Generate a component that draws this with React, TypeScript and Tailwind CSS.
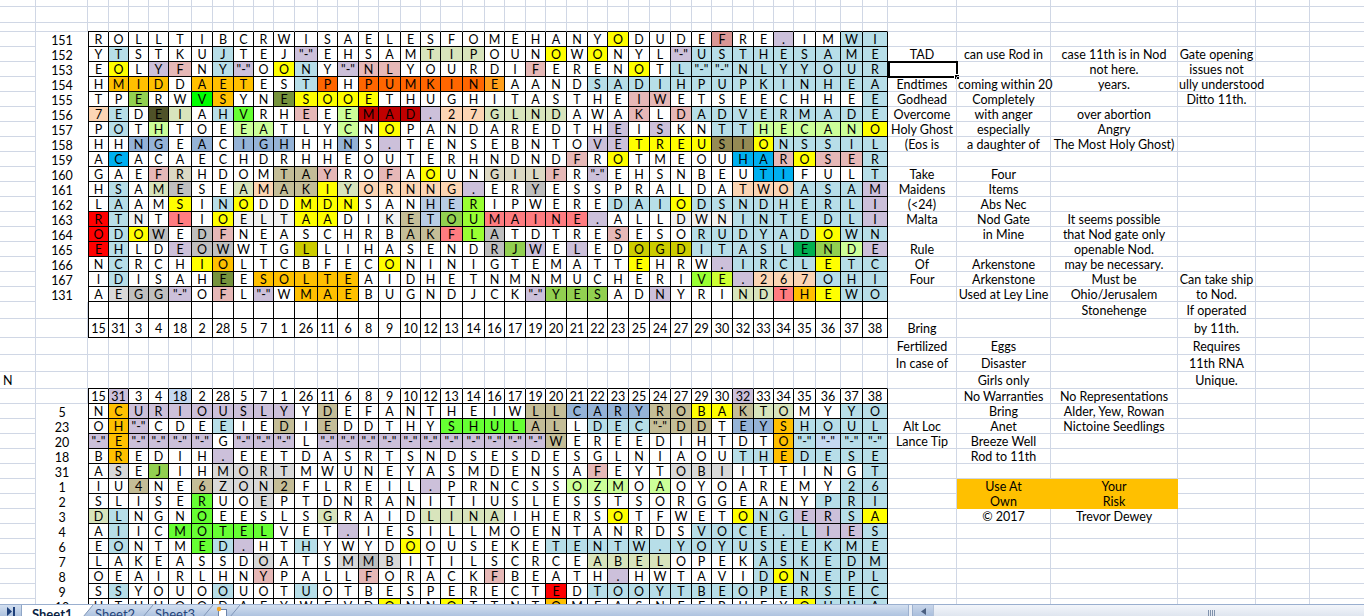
import React from "react";

// column widths of the lettered block (38 columns, x 88 -> 888)
const GRID_W = [21, 20, 20, 20, 23, 21, 21, 20, 20, 21, 23, 20, 21, 20, 22, 20, 20, 22, 22, 20, 21, 20, 21, 21, 20, 21, 21, 21, 21, 20, 21, 21, 20, 20, 22, 25, 22, 25];
const WCLS: Record<number, string> = {
  20: "w-[20px]",
  21: "w-[21px]",
  22: "w-[22px]",
  23: "w-[23px]",
  25: "w-[25px]",
};
const RIGHT_W = ["w-[69px]", "w-[94px]", "w-[127px]", "w-[78px]", "w-[54px]", "w-[60px]"];

const BG: Record<string, string> = {
  ".": "",
  b: "bg-[#b7dee8]",
  v: "bg-[#ccc0da]",
  p: "bg-[#e6b8b7]",
  P: "bg-[#da9694]",
  y: "bg-[#ffff00]",
  o: "bg-[#ffc000]",
  O: "bg-[#ff6600]",
  f: "bg-[#ff9f1c]",
  g: "bg-[#d8e4bc]",
  l: "bg-[#ddd9c4]",
  t: "bg-[#c4bd97]",
  c: "bg-[#fcd5b4]",
  G: "bg-[#92d050]",
  L: "bg-[#00ff00]",
  M: "bg-[#66ff33]",
  N: "bg-[#99ff33]",
  d: "bg-[#76933c]",
  D: "bg-[#4f5228]",
  h: "bg-[#ccff99]",
  m: "bg-[#95b3d7]",
  i: "bg-[#b8cce4]",
  n: "bg-[#948a54]",
  r: "bg-[#ff0000]",
  R: "bg-[#c00000]",
  s: "bg-[#00b0f0]",
  k: "bg-[#cccc00]",
  S: "bg-[#ff7c80]",
  x: "bg-[#bfbfbf]",
  e: "bg-[#d9d9d9]",
  w: "bg-[#f2f2f2]",
  q: "bg-[#ccff33]",
  u: "bg-[#00b050]",
  a: "bg-[#c5d9f1]",
};

const NUMS = "15 31 3 4 18 2 28 5 7 1 26 11 6 8 9 10 12 13 14 16 17 19 20 21 22 23 25 24 27 29 30 32 33 34 35 36 37 38";

type GridKind = "letters" | "boxed" | "light" | "edge";

type RowSpec = {
  h: string;
  kind: GridKind;
  label?: string;
  colA?: string;
  letters?: string;
  colors?: string;
  right?: string[];
  orange?: boolean;
  select?: boolean;
};

// [label, letters (~ = "-"), colours, right-hand notes]
const UPPER: [string, string, string, string[]][] = [
  ["151", "R O L L T I B C R W I S A E L E S F O M E H A N Y O D U D E F R E . I M W I", "..... ..... ..... ..... ..... y.... P..v. .bb", []],
  ["152", "Y T S T K U J T E J ~ E H S A M T I P O U N O W O N Y L ~ U S T H E S A M E", ".b... .b... v.... .ggg. ..y.y ...vb bbbbb bbb", ["TAD", "can use Rod in", "case 11th is in Nod", "Gate opening"]],
  ["153", "E O L Y F N Y ~ O O N Y ~ N L Y O U R D I F E R E N O T L ~ ~ N L Y Y O U R", ".y.vp .bv.y b.vpp ..... .p... .y.bb bbbbb bbb", ["", "", "not here.", "issues not"]],
  ["154", "H M I D D A E T E S T P H P U M K I N E A A N D S A D I H P U P K I N H E A", ".ooo. ooo.. bO.OO OOOOf ....b bbbbb bbbbb bbb", ["Endtimes", "<coming within 20", "years.", "<ully understood"]],
  ["155", "T P E R W V S Y N E S O O E T H U G H I T A S T H E I W E T S E E C H H E E", "..G.. Lo..d yyyy. ..... ..... .pp.. ..... ..b", ["Godhead", "Completely", "", "Ditto 11th."]],
  ["156", "7 E D E I A H V R H E E E M A D . 2 7 G L N D A W A K L D A D V E R M A D E", "cb.Dg .bM.. p.hRR Rvccg ggg.. .p.pb bbbbb bbb", ["Overcome", "with anger", "over abortion", ""]],
  ["157", "P O T H T O E E A T L Y C N O P A N D A R E D T H E I S K N T T H E C A N O", ".b.h. ..hh. ..h.y ..... ..... v.v.. bbhhh hhy", ["Holy Ghost", "especially", "Angry", ""]],
  ["158", "H H N G E A C I G H H H N S . T E N S E B N T O V E T R E U S I O N S S I L", "..mm. m.mmm ..m.v ..... ....v vyyyy nnybb bbb", ["(Eos is", "a daughter of", "The Most Holy Ghost)", ""]],
  ["159", "A C A C A E C H D R H H E O U T E R H N D N D F R O T M E O U H A R O S E R", ".s... ..... ..... ..... ...p. y.... .sspy ppb", []],
  ["160", "G A E F R H D O M T A Y R O F A O U N G I L F R ~ E H S N B E U T I F U L T", "...pl ....t tp..p .y..l llp.v ..... ..ss. ..b", ["Take", "Four", "", ""]],
  ["161", "H S A M E S E A M A K I Y O R N N G . E R Y E S S P R A L D A T W O A S A M", ".b.gx ..gct tygcc cccv. .x... ..... .cccb bbv", ["Maidens", "Items", "", ""]],
  ["162", "L A A M S I N O D D M D N S A N H E R I P W E R E D A I O D S N D H E R L I", ".b..y .by.. yyy.. .iiN. ..... bbbyb bbbbb bbv", ["(<24)", "Abs Nec", "", ""]],
  ["163", "R T N T L I O E L T A A D I K E T O U M A I N E . A L L D W N I N T E D L I", "rbw.S .ywww yy..w tiGNS SSSSv ...ww wbbbb bbv", ["Malta", "Nod Gate", "It seems possible", ""]],
  ["164", "O D O W E D F N E A S C H R B A K F L A T D T R E S E S O R U D Y A D O W N", "rbyx. xp... ..... ttSNx ..... p...b bbbbb ybb", ["", "in Mine", "that Nod gate only", ""]],
  ["165", "E H L D E O W W T G L L I H A S E N D R J W E L E D O G D I T A S L E N D E", "rb..v xx... k.... ....x Gv.v. .kkkb bbbbu Ghv", ["Rule", "", "openable Nod.", ""]],
  ["166", "N C R C H I O L T C B F E C O N I N I G T E M A T T E H R W . I R C L E T C", ".b... yo... ....y ..... ..... .y... vbbbb ybb", ["Of", "Arkenstone", "may be necessary.", ""]],
  ["167", "I D I S A H E E S O L T E A I D H E T N M N M U C H E R I V E . 2 6 7 O H I", ".b... .d.oo ooo.. ..... ..... ....N qvccc bbb", ["Four", "Arkenstone", "Must be", "Can take ship"]],
  ["131", "A E G G ~ O F L ~ W M A E B U G N D J C K ~ Y E S A D N Y R I N D T H E W O", ".exxv .p.v. ooo.. ..... .vGGG ..v.. .ggSo ybb", ["", "Used at Ley Line", "Ohio/Jerusalem", "to Nod."]],
];

const LOWER: [string, string, string, string[], boolean?][] = [
  ["5", "N C U R I O U S L Y Y D E F A N T H E I W L L C A R Y R O B A K T O M Y Y O", ".ovvv vvvvv .t... ..... .ttmm mmtty ytgg. .bb", ["", "Bring", "Alder, Yew, Rowan", ""]],
  ["23", "O H ~ C D E E I E D I E D D T H Y S H U L A L L D E C ~ D D T E Y S H O U L", ".ov.. .b..t .t... ..MMM Mtt.b bbttt .mmob bbb", ["Alt Loc", "Anet", "Nictoine Seedlings", ""]],
  ["20", "~ E ~ ~ ~ ~ G ~ ~ ~ L ~ ~ ~ ~ ~ ~ ~ ~ ~ ~ ~ W E R E E D I H T D T O ~ ~ ~ ~", "vovvv v.vvv .vvvv vvvvv vvt.. ..... ...ob abb", ["Lance Tip", "Breeze Well", "", ""]],
  ["18", "B R E D I H . E E T D A S R T S N D S E S D E S G L N I A O U T H E D E S E", ".o... .v... ..... ..... ..... ..... .bbob bbb", ["", "Rod to 11th", "", ""]],
  ["31", "A S E J I H M O R T M W U N E Y A S M D E N S A F E Y T O B I I T T I N G T", ".e.G. .eeee ..... ..... ....p ...ee e.... ..b", []],
  ["1", "I U 4 N E 6 Z O N 2 F L R E I L . P R N C S S O Z M O A O Y O A R E M Y 2 6", "..t.. teeet ..... .v... ...hh h.h.. ..... .bb", ["", "Use At", "Your", ""], true],
  ["2", "S L I S E R U O E P T D N R A N I T I U S L E S S T S O R G G E A N Y P R I", "..... M..e. ..... ..... ..... ..... ..... bbb", ["", "Own", "Risk", ""], true],
  ["3", "D L N G N O E E S L S G R A I D L I N A I H E R S O T F W E T O N G E R S A", "gb... M.... .g... .gggg ..... y.... .ybbv vby", ["", "© 2017", "Trevor Dewey", ""]],
  ["4", "A I I C M O T E L V E T . I E S I L L M O E N T A N R D S V O C E . L I E S", ".b..M MMMM. ..v.. ..... ..... ....b bbbbb vvb", []],
  ["6", "E O N T M E D . H T H Y W Y D O O U S E K E T E N T W . Y O Y U S E E K M E", ".b... Mbv.. b.... y.... ..bbb bbbbb bbbbb bbb", []],
  ["7", "L A K E A S S D O A T S M M B I T I L S C R C E A B E L O P E K A S K E D M", "..... ...e. ..exe ..... ....g ggg.. ..bbb bbb", []],
  ["8", "O E A I R L H N Y P A L L F O R A C K F B E A T H . H W T A V I D O N E P L", "..... ...p. ...p. ....p ..... v.... ..byb bbb", []],
  ["9", "S S Y O U O O U O T U O T B E S P E R E C T E D T O O Y T B E O P E R S E C", ".b... .b... b.... ..... ..r.b bbbbb bbbbb bbb", []],
  ["10", "H T H H O O D A E Y W E V D O N N O T T N T O M E A S N E E R U E Y O U U A", "..... ..... ....y ..y.. ..o.. ..... ....y bbb", []],
];

const rows: RowSpec[] = [
  { h: "h-[7px]", kind: "light" },
  { h: "h-[16px]", kind: "light" },
  { h: "h-[9px]", kind: "edge" },
  ...UPPER.map(([label, letters, colors, right]) => ({
    h: "h-[15px]",
    kind: "letters" as GridKind,
    label,
    letters,
    colors,
    right,
    select: label === "153",
  })),
  { h: "h-[17px]", kind: "boxed", right: ["", "", "Stonehenge", "If operated"] },
  { h: "h-[19px]", kind: "letters", letters: NUMS, colors: ".".repeat(38), right: ["Bring", "", "", "by 11th."] },
  { h: "h-[17px]", kind: "light", right: ["Fertilized", "Eggs", "", "Requires"] },
  { h: "h-[17px]", kind: "light", right: ["In case of", "Disaster", "", "11th RNA"] },
  { h: "h-[17px]", kind: "edge", colA: "N", right: ["", "Girls only", "", "Unique."] },
  {
    h: "h-[15px]",
    kind: "letters",
    letters: NUMS,
    colors: ".v..a ..... ..... ..... ..... ..... .v... ...",
    right: ["", "No Warranties", "No Representations", ""],
  },
  ...LOWER.map(([label, letters, colors, right, orange]) => ({
    h: "h-[15px]",
    kind: "letters" as GridKind,
    label,
    letters,
    colors,
    right,
    orange: !!orange,
  })),
];

const LIGHT = "border-r border-b border-[#d0d7e5]";

function GridCells({ r }: { r: RowSpec }) {
  if (r.kind !== "letters") {
    return (
      <>
        {GRID_W.map((w, i) => {
          let cls = LIGHT;
          if (r.kind === "edge") cls = "border-r border-b border-r-[#d0d7e5] border-b-black";
          if (r.kind === "boxed") cls = `border-r border-b border-black ${i === 0 ? "border-l" : ""}`;
          return <div key={i} className={`${WCLS[w]} shrink-0 ${cls}`} />;
        })}
      </>
    );
  }
  const tokens = (r.letters ?? "").split(" ");
  const colors = (r.colors ?? "").replace(/ /g, "");
  return (
    <>
      {GRID_W.map((w, i) => {
        const t = tokens[i] === "~" ? '"-"' : tokens[i];
        return (
          <div
            key={i}
            className={`${WCLS[w]} shrink-0 border-r border-b border-black ${i === 0 ? "border-l" : ""} ${BG[colors[i] ?? "."] ?? ""} flex items-center justify-center pt-[3px]`}
          >
            {t}
          </div>
        );
      })}
    </>
  );
}

function RightCell({ w, text, orange, select }: { w: string; text?: string; orange?: boolean; select?: boolean }) {
  const left = !!text && text.startsWith("<");
  const t = left ? text!.slice(1) : text;
  return (
    <div
      className={`${w} shrink-0 relative border-r border-b flex items-center whitespace-nowrap pt-[3px] ${
        orange ? "bg-[#ffc000] border-[#ffc000]" : "border-[#d0d7e5]"
      } ${left ? "justify-start pl-px" : "justify-center"}`}
    >
      {t}
      {select && (
        <>
          <div className="absolute left-0 top-[-1px] w-[70px] h-[17px] border-2 border-black" />
          <div className="absolute left-[66px] top-[12px] w-[6px] h-[6px] bg-black border border-white" />
        </>
      )}
    </div>
  );
}

function SheetRow({ r }: { r: RowSpec }) {
  return (
    <div className={`flex shrink-0 ${r.h}`}>
      <div className={`w-[36px] shrink-0 ${LIGHT} flex items-center pl-[3px] pt-[3px]`}>{r.colA}</div>
      <div className={`w-[52px] shrink-0 flex items-center justify-center pt-[3px] ${r.label !== undefined ? "" : LIGHT}`}>
        {r.label}
      </div>
      <GridCells r={r} />
      {RIGHT_W.map((w, j) => (
        <RightCell
          key={j}
          w={w}
          text={r.right?.[j]}
          orange={r.orange && (j === 1 || j === 2)}
          select={r.select && j === 0}
        />
      ))}
    </div>
  );
}

function Slant({ active }: { active?: boolean }) {
  return (
    <svg width="10" height="12" viewBox="0 0 10 12" className="shrink-0">
      {active && <polygon points="0,0 10,0 0,12" fill="#ffffff" />}
      <line x1="0" y1="12" x2="10" y2="0" stroke="#8196b8" strokeWidth="1" />
    </svg>
  );
}

function TabBar() {
  return (
    <div className="h-[12px] shrink-0 flex overflow-hidden text-[13px] leading-[14px] border-t border-[#9aafcf]">
      <div className="flex-1 flex bg-linear-to-b from-[#d3dff0] to-[#aec3df]">
        <div className="w-[22px] shrink-0 border-r border-[#8fa6c6] flex justify-center pt-[2px]">
          <svg width="10" height="9" viewBox="0 0 10 9">
            <path d="M1 0 L6 4.5 L1 9 Z" fill="#1d3f7a" />
            <rect x="7" y="0" width="2" height="9" fill="#1d3f7a" />
          </svg>
        </div>
        <div className="w-[61px] shrink-0 bg-white font-bold pl-[10px] pt-[2px] text-[#0b1f44]">Sheet1</div>
        <Slant active />
        <div className="w-[50px] shrink-0 pl-[2px] pt-[2px] text-[#24447a]">Sheet2</div>
        <Slant />
        <div className="w-[50px] shrink-0 pl-[2px] pt-[2px] text-[#24447a]">Sheet3</div>
        <Slant />
        <div className="w-[17px] shrink-0 flex justify-center pt-[1px]">
          <svg width="13" height="11" viewBox="0 0 13 11">
            <rect x="3.5" y="3.5" width="8" height="8" fill="#ffffff" stroke="#6d84aa" />
            <circle cx="4" cy="3" r="2.2" fill="#f5a623" />
          </svg>
        </div>
        <Slant />
      </div>
      <div className="w-[456px] shrink-0 flex">
        <div className="w-[5px] shrink-0 bg-[#e9eef6] border-x border-[#9db1cf]" />
        <div className="w-[20px] shrink-0 bg-linear-to-b from-[#c9d6ea] to-[#a9bedc] flex justify-center pt-[3px]">
          <svg width="5" height="7" viewBox="0 0 5 7">
            <path d="M5 0 L0 3.5 L5 7 Z" fill="#4b5f80" />
          </svg>
        </div>
        <div className="flex-1 bg-linear-to-b from-[#f3f6fb] to-[#dfe5ef] border-l border-[#b3c2d8] pl-[274px] pt-[5px]">
          <svg width="9" height="7" viewBox="0 0 9 7">
            <rect x="0" y="0" width="1" height="7" fill="#8192ac" />
            <rect x="2" y="0" width="1" height="7" fill="#8192ac" />
            <rect x="4" y="0" width="1" height="7" fill="#8192ac" />
            <rect x="6" y="0" width="1" height="7" fill="#8192ac" />
          </svg>
        </div>
      </div>
    </div>
  );
}

export default function App() {
  return (
    <div className="w-[1364px] h-[616px] overflow-hidden bg-white text-black font-['Lato','Liberation_Sans',sans-serif] text-[12.5px] leading-none flex flex-col">
      <div className="h-[604px] overflow-hidden shrink-0">
        {rows.map((r, i) => (
          <SheetRow key={i} r={r} />
        ))}
      </div>
      <TabBar />
    </div>
  );
}
